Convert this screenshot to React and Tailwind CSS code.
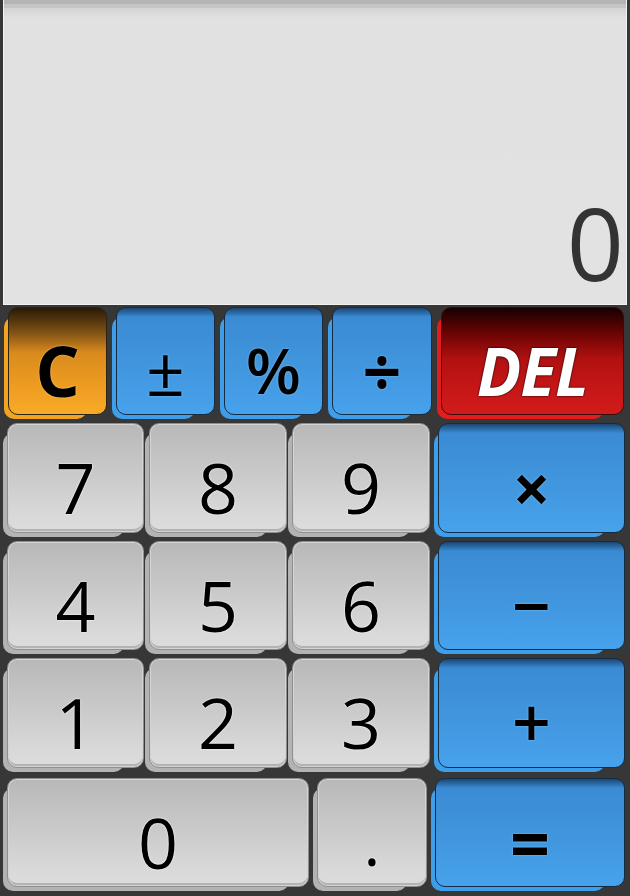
const GRAY_FACE =
  "border border-[#8f8f8f] bg-[linear-gradient(to_bottom,#b8b8b8,#c9c9c9_45%,#d9d9d9_85%,#dcdcdc)] shadow-[inset_0_0_0_1px_#d4d4d4,inset_0_-3px_0_#b3b3b3] text-black [text-shadow:0_0_2px_#fff,0_0_1px_#fff]";
const GRAY_BACK = "bg-[#b3b3b3]";
const BLUE_FACE =
  "border border-[#132c46] bg-[linear-gradient(to_bottom,#1b4673,#3a8bd3_9px,#4095dc_50%,#47a2ec)] text-black [text-shadow:0_0_2px_#8fd0ff]";
const BLUE_BACK = "bg-[#3f9ee9]";
const ORANGE_FACE =
  "border border-[#2b2212] bg-[linear-gradient(to_bottom,#2a1a06,#7a4f14_22%,#d98a1d_42%,#ee9d21_75%,#f8ab27)] text-black [text-shadow:0_0_2px_#ffd27a]";
const ORANGE_BACK = "bg-[#f3a31f]";
const RED_FACE =
  "border border-[#3a0b0b] bg-[linear-gradient(to_bottom,#160000,#6e0404_25%,#b11111_48%,#c61616_75%,#d21b1b)] text-white [text-shadow:0_0_2px_#000,0_0_1px_#000]";
const RED_BACK = "bg-[#e31d1d]";

function Key({ width, face, back, text = "text-[70px]", children }) {
  return (
    <div className={`relative h-full ${width}`}>
      <div className={`absolute -left-[4px] right-[20px] top-[10px] -bottom-[4px] rounded-[10px] ${back}`} />
      <div
        className={`relative h-full rounded-[10px] flex items-center justify-center pt-[18px] leading-none ${face} ${text}`}
      >
        {children}
      </div>
    </div>
  );
}

export default function App() {
  return (
    <div className="w-[630px] h-[896px] bg-[#373737] flex flex-col font-['Open_Sans',sans-serif] overflow-hidden">
      <div className="mx-[3px] h-[305px] shrink-0 border-x border-b border-[#f2f2f2] bg-[linear-gradient(to_bottom,#b4b4b4,#b4b4b4_4px,#c5c5c5_4px,#c5c5c5_8px,#d3d3d3_8px,#e1e1e1_18px,#e2e2e2)] flex items-end justify-end pb-[12px] pr-[2px]">
        <span className="text-[100px] leading-none text-[#333333]">0</span>
      </div>

      <div className="flex mt-[2px] h-[108px] pl-[8px] gap-[9px] shrink-0">
        <Key width="w-[99px]" face={ORANGE_FACE} back={ORANGE_BACK} text="text-[70px] font-bold">C</Key>
        <Key width="w-[99px]" face={BLUE_FACE} back={BLUE_BACK} text="text-[68px]">±</Key>
        <Key width="w-[99px]" face={BLUE_FACE} back={BLUE_BACK} text="text-[64px] font-semibold">%</Key>
        <Key width="w-[100px]" face={BLUE_FACE} back={BLUE_BACK} text="text-[68px] font-bold">÷</Key>
        <Key width="w-[183px]" face={RED_FACE} back={RED_BACK} text="text-[66px] font-bold italic tracking-[-1px]">DEL</Key>
      </div>

      <div className="flex mt-[8px] h-[110px] pl-[7px] shrink-0">
        <Key width="w-[137px]" face={GRAY_FACE} back={GRAY_BACK}>7</Key>
        <div className="ml-[5px]"><Key width="w-[138px]" face={GRAY_FACE} back={GRAY_BACK}>8</Key></div>
        <div className="ml-[5px]"><Key width="w-[138px]" face={GRAY_FACE} back={GRAY_BACK}>9</Key></div>
        <div className="ml-[8px]"><Key width="w-[187px]" face={BLUE_FACE} back={BLUE_BACK} text="text-[66px] font-bold">×</Key></div>
      </div>

      <div className="flex mt-[8px] h-[109px] pl-[7px] shrink-0">
        <Key width="w-[137px]" face={GRAY_FACE} back={GRAY_BACK}>4</Key>
        <div className="ml-[5px]"><Key width="w-[138px]" face={GRAY_FACE} back={GRAY_BACK}>5</Key></div>
        <div className="ml-[5px]"><Key width="w-[138px]" face={GRAY_FACE} back={GRAY_BACK}>6</Key></div>
        <div className="ml-[8px]"><Key width="w-[187px]" face={BLUE_FACE} back={BLUE_BACK} text="text-[68px] font-semibold">−</Key></div>
      </div>

      <div className="flex mt-[8px] h-[110px] pl-[7px] shrink-0">
        <Key width="w-[137px]" face={GRAY_FACE} back={GRAY_BACK}>1</Key>
        <div className="ml-[5px]"><Key width="w-[138px]" face={GRAY_FACE} back={GRAY_BACK}>2</Key></div>
        <div className="ml-[5px]"><Key width="w-[138px]" face={GRAY_FACE} back={GRAY_BACK}>3</Key></div>
        <div className="ml-[8px]"><Key width="w-[187px]" face={BLUE_FACE} back={BLUE_BACK} text="text-[68px] font-semibold">+</Key></div>
      </div>

      <div className="flex mt-[10px] h-[109px] pl-[7px] shrink-0">
        <Key width="w-[302px]" face={GRAY_FACE} back={GRAY_BACK}>0</Key>
        <div className="ml-[8px]"><Key width="w-[110px]" face={GRAY_FACE} back={GRAY_BACK} text="text-[64px]">.</Key></div>
        <div className="ml-[8px]"><Key width="w-[190px]" face={BLUE_FACE} back={BLUE_BACK} text="text-[70px] font-bold">=</Key></div>
      </div>
    </div>
  );
}
